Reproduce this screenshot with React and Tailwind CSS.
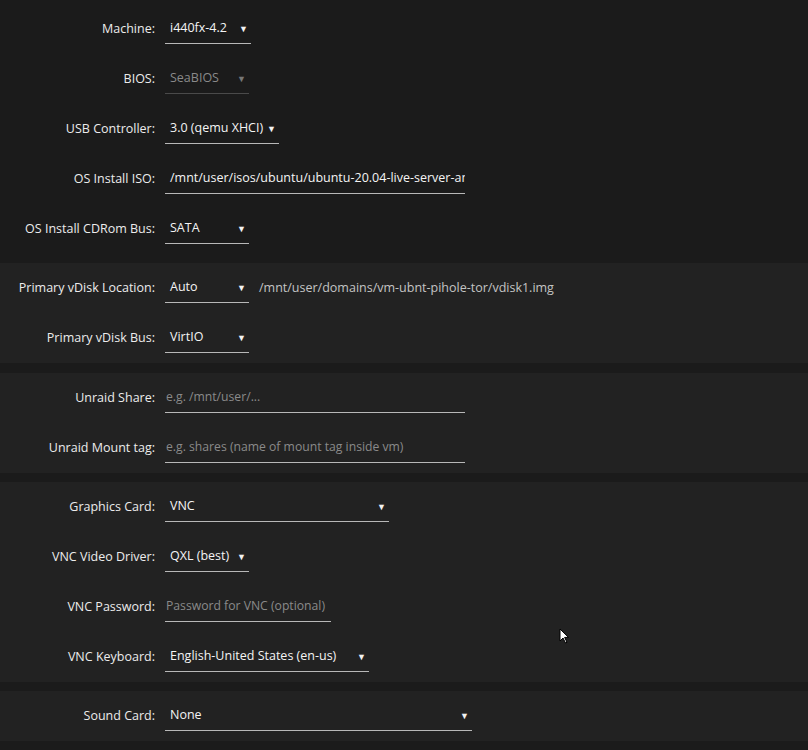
import React from 'react';

const Arrow = ({ dim }) => (
  <span className={`shrink-0 text-[9px] leading-none ml-[3px] ${dim ? 'text-[#777]' : 'text-[#f2f2f2]'}`}>▼</span>
);

const Field = ({ label, value, width, select, placeholder, dim, extra }) => (
  <div className="flex items-center h-[50px]">
    <label className="w-[155px] text-right text-[#ececec] whitespace-nowrap">{label}</label>
    <div
      className={`ml-[10px] h-[30px] flex items-center justify-between border-b overflow-hidden ${placeholder ? 'pl-[1px]' : 'pl-[5px]'} ${select ? 'pr-[3px]' : ''} ${dim ? 'border-[#4a4a4a]' : 'border-[#b8b8b8]'}`}
      style={{ width }}
    >
      <span
        className={`whitespace-nowrap ${placeholder ? 'text-[#8a8a8a] text-[12.2px]' : dim ? 'text-[#8a8a8a]' : 'text-[#f4f4f4]'}`}
      >
        {value || placeholder}
      </span>
      {select && <Arrow dim={dim} />}
    </div>
    {extra && <span className="ml-[10px] text-[#c4c4c4] whitespace-nowrap">{extra}</span>}
  </div>
);

export default function App() {
  return (
    <div
      className="w-[808px] h-[750px] bg-[#1b1b1b] overflow-hidden relative text-[12.5px] font-medium"
      style={{ fontFamily: '"Open Sans", "Noto Sans", sans-serif' }}
    >
      <div className="pt-[4px]">
        <Field label="Machine:" value="i440fx-4.2" width={86} select />
        <Field label="BIOS:" value="SeaBIOS" width={84} select dim />
        <Field label="USB Controller:" value="3.0 (qemu XHCI)" width={114} select />
        <Field label="OS Install ISO:" value="/mnt/user/isos/ubuntu/ubuntu-20.04-live-server-amd64.iso" width={300} />
        <Field label="OS Install CDRom Bus:" value="SATA" width={84} select />
      </div>

      <div className="mt-[9px] bg-[#222222]">
        <Field
          label="Primary vDisk Location:"
          value="Auto"
          width={84}
          select
          extra="/mnt/user/domains/vm-ubnt-pihole-tor/vdisk1.img"
        />
        <Field label="Primary vDisk Bus:" value="VirtIO" width={84} select />
      </div>

      <div className="mt-[10px] bg-[#222222]">
        <Field label="Unraid Share:" placeholder="e.g. /mnt/user/..." width={300} />
        <Field label="Unraid Mount tag:" placeholder="e.g. shares (name of mount tag inside vm)" width={300} />
      </div>

      <div className="mt-[9px] bg-[#222222]">
        <Field label="Graphics Card:" value="VNC" width={224} select />
        <Field label="VNC Video Driver:" value="QXL (best)" width={84} select />
        <Field label="VNC Password:" placeholder="Password for VNC (optional)" width={166} />
        <Field label="VNC Keyboard:" value="English-United States (en-us)" width={204} select />
      </div>

      <div className="mt-[9px] bg-[#222222]">
        <Field label="Sound Card:" value="None" width={307} select />
      </div>

      <svg className="absolute left-[559px] top-[628px]" width="11" height="16" viewBox="0 0 11 16">
        <path d="M1 1 L1 13 L4 10 L6.5 15 L8 14.3 L5.6 9.4 L9.5 9.4 Z" fill="#fff" stroke="#000" strokeWidth="1" />
      </svg>
    </div>
  );
}
